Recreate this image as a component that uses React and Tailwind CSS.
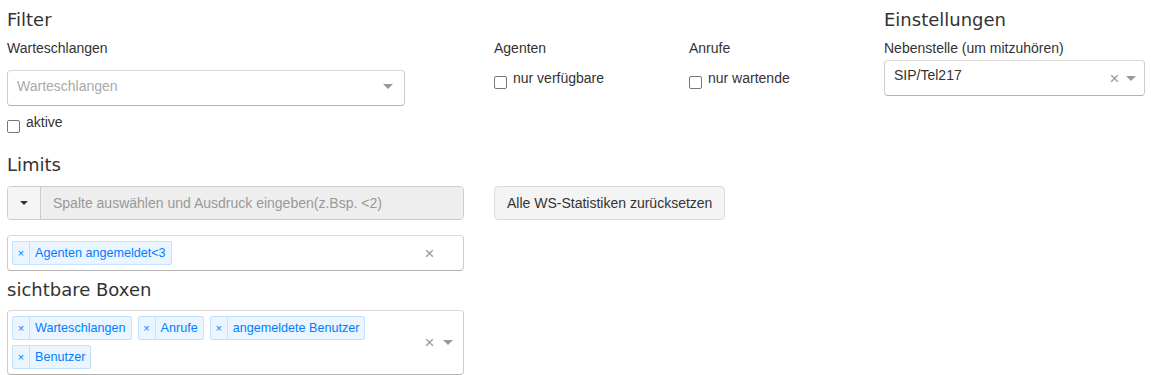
import React from 'react'

const body = { fontFamily: '"Liberation Sans", Arial, sans-serif' }
const head = { fontFamily: '"DejaVu Sans", Verdana, sans-serif' }

function Heading({ children, className = '' }) {
  return (
    <h4 style={head} className={`text-[18px] leading-[20px] text-[#333] ${className}`}>
      {children}
    </h4>
  )
}

function Caret({ color = 'border-t-[#999]' }) {
  return <span className={`inline-block w-0 h-0 border-t-[5px] border-x-[5px] border-x-transparent ${color}`} />
}

function Clear({ className = '' }) {
  return <span className={`text-[17px] leading-none text-[#999] text-center ${className}`}>×</span>
}

function Check({ label }) {
  return (
    <label className="flex items-start gap-[6px] text-[14px] leading-[20px] text-[#333]">
      <span className="mt-[8px] w-[13px] h-[13px] rounded-[2px] border-[1.5px] border-[#767676] bg-white shrink-0" />
      <span>{label}</span>
    </label>
  )
}

function Tag({ children }) {
  return (
    <span className="flex h-[24px] items-stretch rounded-[2px] border border-[#c2e0ff] bg-[#ebf5ff] text-[#007eff] text-[12.6px] leading-[17px]">
      <span className="w-[17px] flex items-center justify-center border-r border-[#c2e0ff] text-[11px]">×</span>
      <span className="flex items-center px-[5px]">{children}</span>
    </span>
  )
}

function MultiBox({ tags, arrow, className = '' }) {
  return (
    <div className={`flex items-center rounded-[4px] border border-[#ccc] border-t-[#d9d9d9] border-b-[#b3b3b3] bg-white ${className}`}>
      <div className="flex-1 flex flex-wrap gap-x-[6px] gap-y-[5px] pl-[4px] pt-[5px] pb-[5px]">
        {tags.map(t => <Tag key={t}>{t}</Tag>)}
      </div>
      <Clear className="w-[17px]" />
      <span className="w-[25px] pr-[5px] flex justify-center">{arrow && <Caret />}</span>
    </div>
  )
}

export default function App() {
  return (
    <div style={body} className="bg-white min-h-screen flex pl-[7px] pt-[10px] text-[14px] text-[#333]">
      <div className="w-[457px] shrink-0">
        <Heading>Filter</Heading>
        <div className="mt-[8px] leading-[20px]">Warteschlangen</div>
        <div className="mt-[12px] w-[398px] h-[36px] flex items-center rounded-[4px] border border-[#ccc] border-t-[#d9d9d9] border-b-[#b3b3b3] bg-white pb-[4px]">
          <span className="flex-1 pl-[9px] text-[#aaa] leading-[20px]">Warteschlangen</span>
          <span className="w-[25px] pr-[7px] flex justify-center"><Caret /></span>
        </div>
        <div className="mt-[6px]">
          <Check label="aktive" />
        </div>

        <Heading className="mt-[22px]">Limits</Heading>
        <div className="mt-[11px] h-[34px] flex rounded-[4px] border border-[#ccc] overflow-hidden">
          <div className="w-[33px] flex items-center justify-center bg-[#f5f5f5] border-r border-[#ccc]">
            <span className="inline-block w-0 h-0 border-t-[4px] border-x-[4px] border-x-transparent border-t-[#333]" />
          </div>
          <div className="flex-1 flex items-center pl-[12px] bg-[#eee] text-[#999] leading-[20px]">
            Spalte auswählen und Ausdruck eingeben(z.Bsp. &lt;2)
          </div>
        </div>
        <MultiBox className="mt-[15px]" tags={['Agenten angemeldet<3']} />

        <Heading className="mt-[9px]">sichtbare Boxen</Heading>
        <MultiBox
          className="mt-[10px]"
          arrow
          tags={['Warteschlangen', 'Anrufe', 'angemeldete Benutzer', 'Benutzer']}
        />
      </div>

      <div className="ml-[30px] w-[390px] shrink-0 pt-[28px]">
        <div className="flex">
          <div className="w-[195px]">
            <div className="leading-[20px]">Agenten</div>
            <div className="mt-[10px]"><Check label="nur verfügbare" /></div>
          </div>
          <div>
            <div className="leading-[20px]">Anrufe</div>
            <div className="mt-[10px]"><Check label="nur wartende" /></div>
          </div>
        </div>
        <button className="mt-[97px] h-[34px] px-[12px] rounded-[4px] border border-[#dcdcdc] bg-[#f4f4f4] text-[#333] text-[14px] leading-[20px]">
          Alle WS-Statistiken zurücksetzen
        </button>
      </div>

      <div className="w-[261px] shrink-0">
        <Heading>Einstellungen</Heading>
        <div className="mt-[8px] leading-[20px]">Nebenstelle (um mitzuhören)</div>
        <div className="mt-[2px] h-[36px] flex items-center rounded-[4px] border border-[#ccc] border-t-[#d9d9d9] border-b-[#b3b3b3] bg-white">
          <span className="flex-1 pl-[9px] leading-[20px] pb-[7px] pt-[1px]">SIP/Tel217</span>
          <Clear className="w-[15px]" />
          <span className="w-[22px] pr-[5px] flex justify-center"><Caret /></span>
        </div>
      </div>
    </div>
  )
}
